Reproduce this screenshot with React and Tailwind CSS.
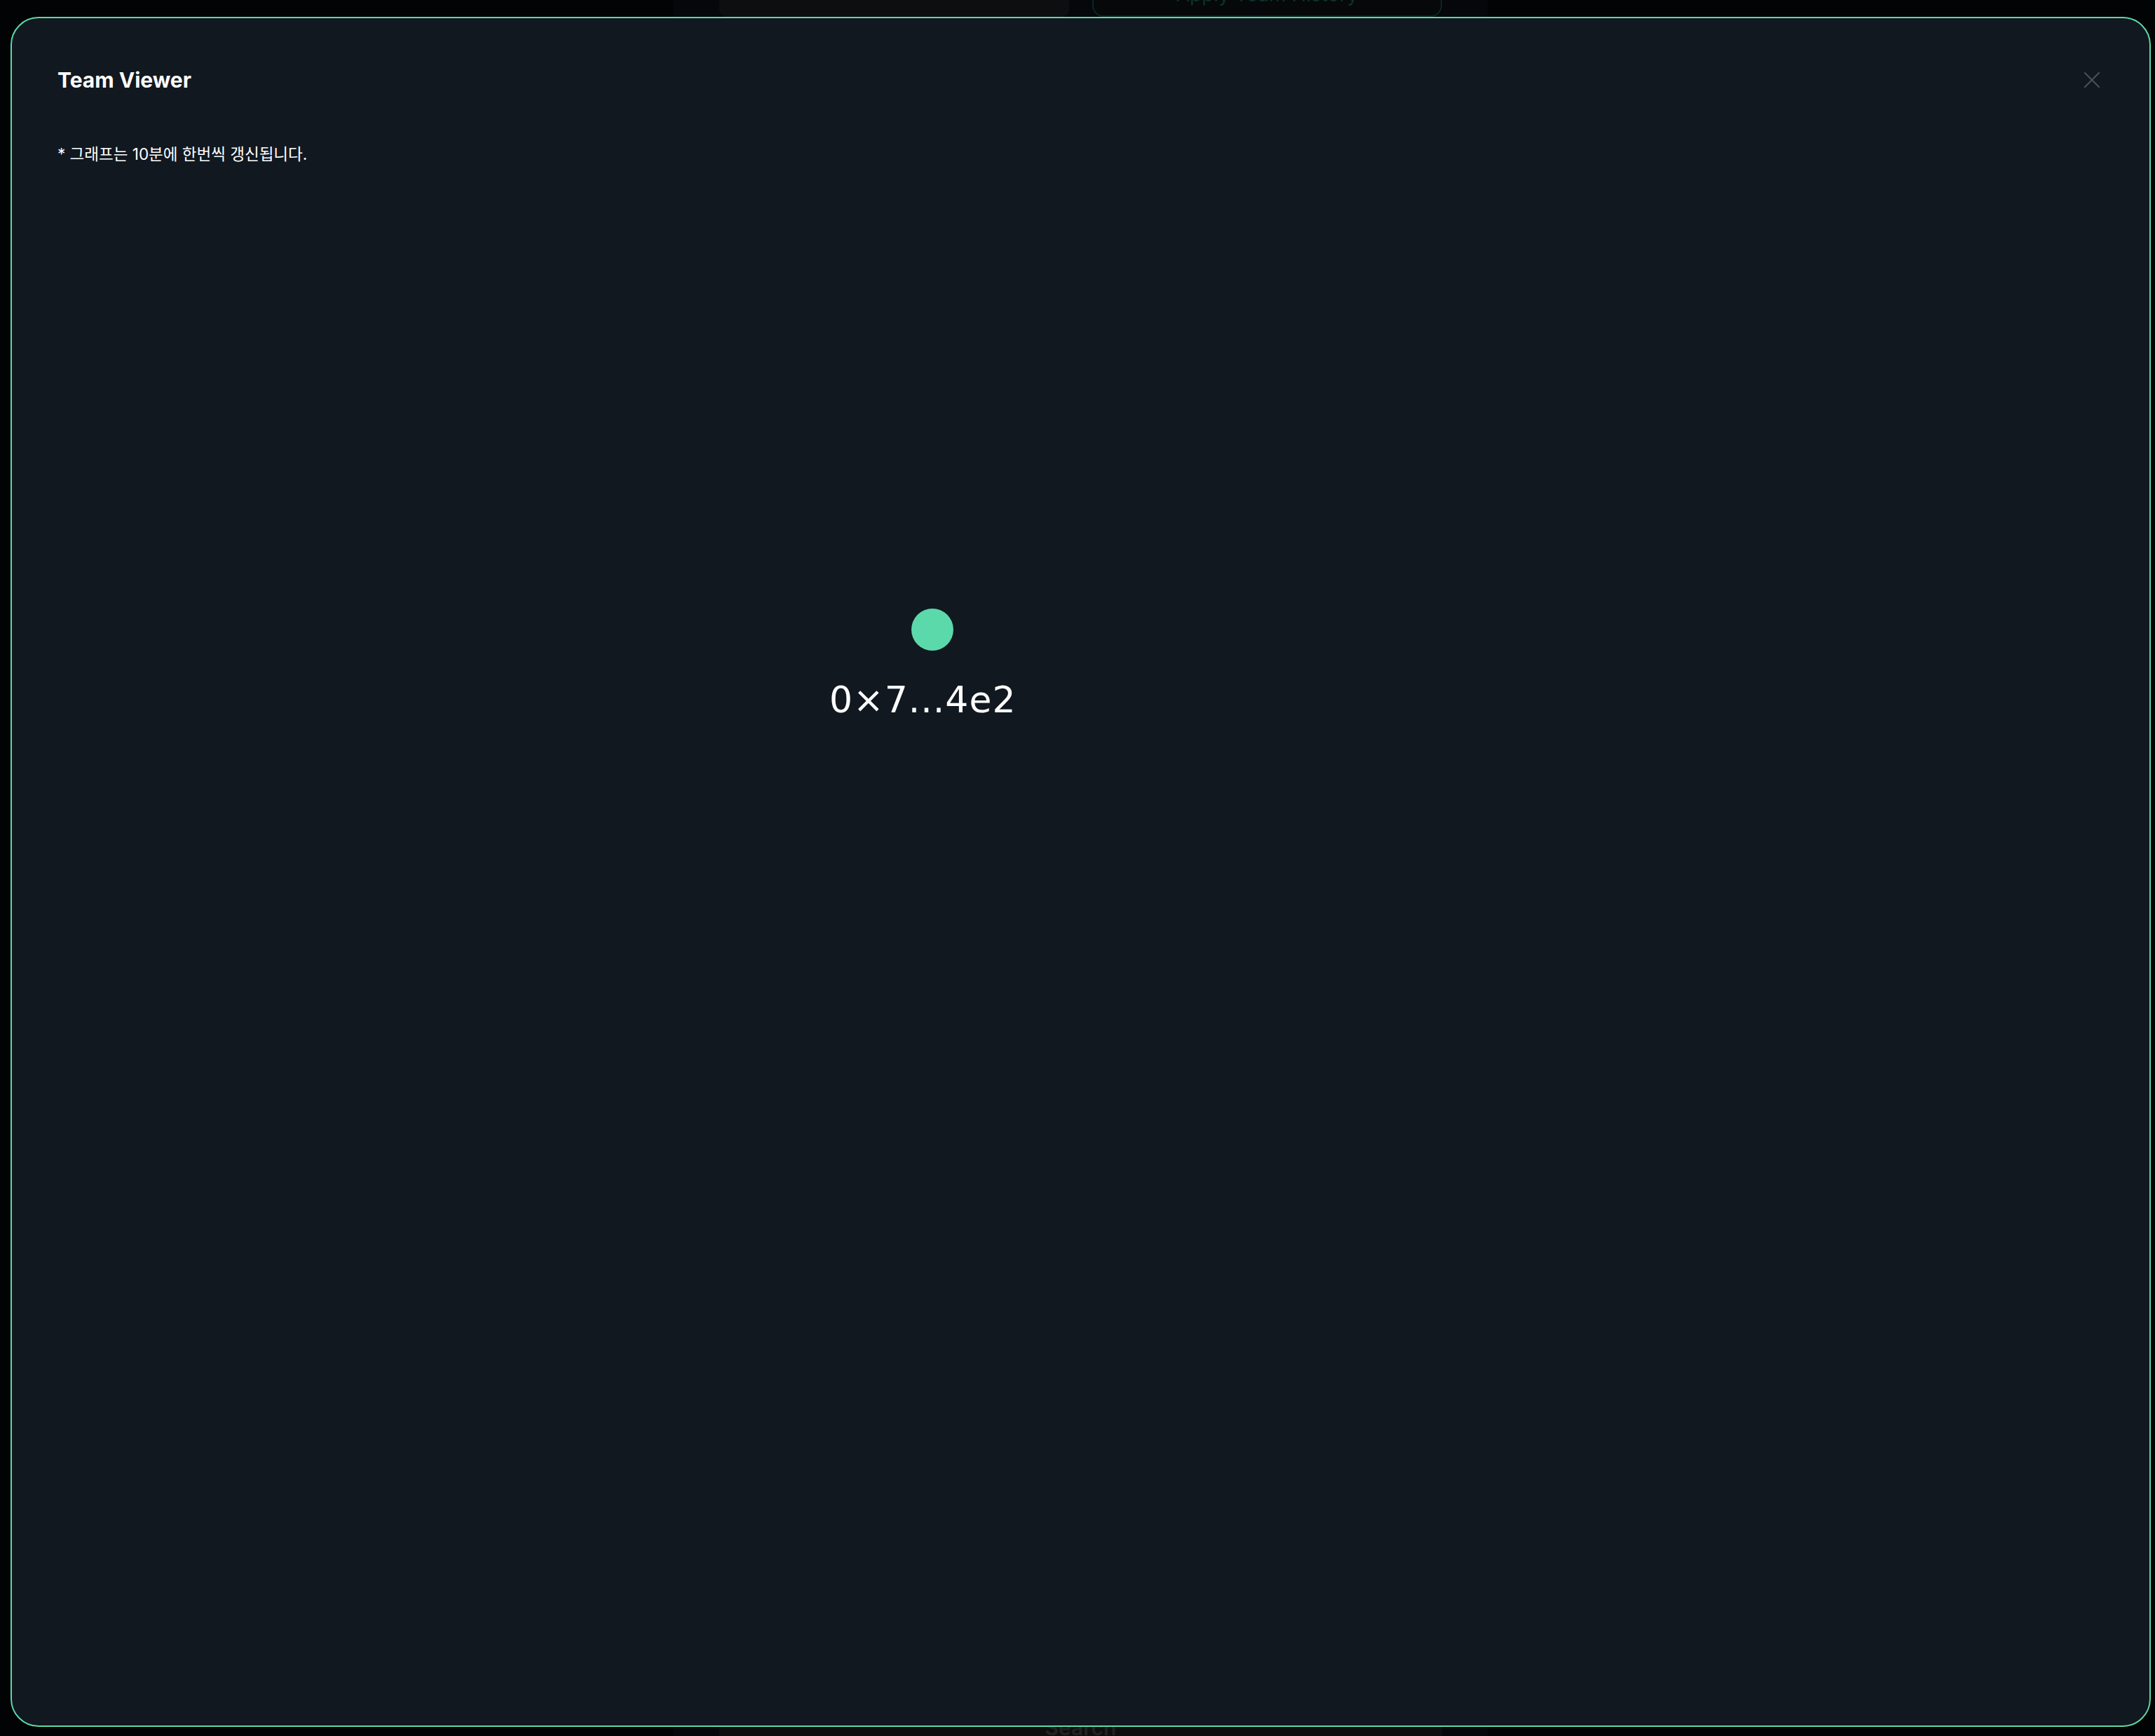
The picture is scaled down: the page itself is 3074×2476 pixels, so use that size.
const nodes = [{ id: '0x7a1f9c04e2', label: '0×7...4e2', x: 1283, y: 842 }];

function CloseIcon() {
  return (
    <svg width="24" height="24" viewBox="0 0 24 24" fill="none" stroke="#4b5158" strokeWidth="2" strokeLinecap="square">
      <path d="M2 2L22 22M22 2L2 22" />
    </svg>
  );
}

function GraphNode({ node }) {
  return (
    <>
      <div
        className="absolute h-[60px] w-[60px] rounded-full bg-[#5cd9aa]"
        style={{ left: node.x, top: node.y }}
      />
      <div
        className="absolute whitespace-nowrap text-[52px] leading-none tracking-[1px] text-white"
        style={{ left: node.x - 117, top: node.y + 104, fontFamily: '"DejaVu Sans", sans-serif' }}
      >
        {node.label}
      </div>
    </>
  );
}

function BackdropPage() {
  return (
    <div className="ml-[961px] flex h-full w-[1161px] flex-col justify-between bg-[#05070a]">
      <div className="-mt-[40px] flex h-[64px] gap-[33px] px-[65px]">
        <div className="w-[499px] rounded-[10px] bg-[#0d0e0f]" />
        <div className="flex w-[499px] items-end justify-center rounded-[16px] border-2 border-[#0b2621] bg-[#060809] pb-[14px] text-[28px] leading-[32px] text-[#0d322b]">
          Apply Team History
        </div>
      </div>
      <div className="flex h-[40px] px-[65px]">
        <div className="flex w-[1031px] items-start justify-center bg-[#0e0e0e] pt-[6px] text-[30px] font-semibold text-[#222222]">
          Search
        </div>
      </div>
    </div>
  );
}

export default function App() {
  return (
    <div className="relative h-[2476px] w-[3074px] overflow-hidden bg-[#020304]" style={{ fontFamily: 'Inter, "Noto Sans CJK KR", sans-serif' }}>
      <BackdropPage />
      <div className="absolute left-[15px] top-[24px] h-[2439px] w-[3053px] rounded-[40px] border-2 border-[#5cd9a8] bg-[#111820]">
        <div className="absolute inset-0">
          {nodes.map((node) => (
            <GraphNode key={node.id} node={node} />
          ))}
        </div>
        <div className="relative flex flex-col pl-[65px] pr-[70px] pt-[70px]">
          <div className="flex items-center justify-between">
            <h2 className="text-[30px] font-bold leading-[36px] text-white">Team Viewer</h2>
            <button type="button" className="p-0">
              <CloseIcon />
            </button>
          </div>
          <p className="mt-[73px] text-[22.5px] leading-[30px] text-white">* 그래프는 10분에 한번씩 갱신됩니다.</p>
        </div>
      </div>
    </div>
  );
}
